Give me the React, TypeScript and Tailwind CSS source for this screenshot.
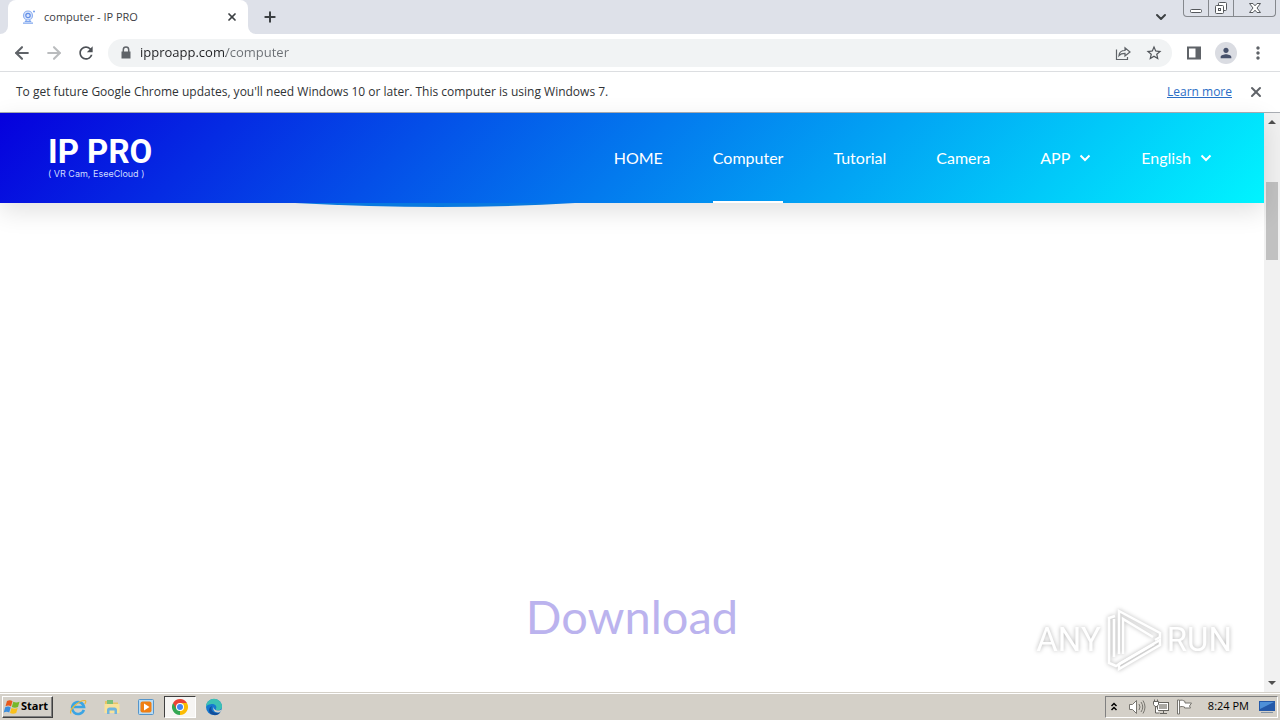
import { useState, type ReactNode } from "react";
import { ArrowLeft, ArrowRight, ChevronDown, Plus, X } from "lucide-react";
import { MdMoreVert, MdPerson, MdRefresh, MdStarOutline } from "react-icons/md";

type NavItem = {
  label: string;
  active?: boolean;
  menu?: boolean;
};

const navItems: NavItem[] = [
  { label: "HOME" },
  { label: "Computer", active: true },
  { label: "Tutorial" },
  { label: "Camera" },
  { label: "APP", menu: true },
  { label: "English", menu: true },
];

const CameraFavicon = () => (
  <svg viewBox="0 0 16 16" className="size-4 shrink-0" fill="none">
    <circle cx="8" cy="6.5" r="4.5" fill="#dbe6fb" stroke="#8fb0f0" strokeWidth="1.2" />
    <circle cx="8" cy="6.5" r="2.2" stroke="#5f8de8" strokeWidth="1.2" />
    <path d="M6.500 11l-1 1.500h5l-1-1.500M3 14.200h10M13 2.500h2M14 1.500v2" stroke="#7fa6ee" strokeWidth="1.200" />
  </svg>
);

const WindowButtons = () => (
  <div className="flex h-[17px] w-[93px] overflow-hidden rounded-b border border-t-0 border-[#85888d] text-[#55585c]">
    <button aria-label="Minimize" className="flex w-[25px] items-center justify-center border-r border-[#85888d]">
      <svg viewBox="0 0 14 14" className="size-3.5" fill="#fff" stroke="currentColor">
        <rect x="1.500" y="8.500" width="11" height="3" rx="1" />
      </svg>
    </button>
    <button aria-label="Restore" className="flex w-[25px] items-center justify-center border-r border-[#85888d]">
      <svg viewBox="0 0 14 14" className="size-3.5" fill="#fff" stroke="currentColor">
        <rect x="4.500" y="1.500" width="8" height="8" rx="1" />
        <rect x="1.500" y="4.500" width="8" height="8" rx="1" />
        <rect x="4.500" y="7.500" width="2" height="2" />
      </svg>
    </button>
    <button aria-label="Close window" className="flex flex-1 items-center justify-center">
      <svg viewBox="0 0 14 14" className="size-3.5" fill="#fff" stroke="currentColor">
        <path d="M1.500 2.500h3.500l2 2.300 2-2.300h3.500l-3.500 4.500 3.500 4.500h-3.500l-2-2.300-2 2.300H1.500L5 7z" />
      </svg>
    </button>
  </div>
);

const TabStrip = () => (
  <div className="flex h-[34px] shrink-0 bg-[#dee1e9]">
    <div className="w-2 bg-white">
      <div className="h-full rounded-br-lg bg-[#dee1e9]" />
    </div>
    <div className="flex w-60 items-center rounded-t-lg bg-white pr-2 pl-3">
      <CameraFavicon />
      <span className="ml-2 flex-1 font-['Open_Sans',sans-serif] text-[11px] text-[#3c4043]">
        computer - IP PRO
      </span>
      <button aria-label="Close tab" className="p-0.5">
        <X className="size-3" strokeWidth={3.5} color="#3c4043" />
      </button>
    </div>
    <div className="w-2 bg-white">
      <div className="h-full rounded-bl-lg bg-[#dee1e9]" />
    </div>
    <button aria-label="New tab" className="px-1.5">
      <Plus className="size-4" strokeWidth={3} color="#3c4043" />
    </button>
    <div className="ml-auto flex">
      <button aria-label="Search tabs" className="mr-2.5 px-1">
        <ChevronDown className="size-4" strokeWidth={3} color="#3c4043" />
      </button>
      <WindowButtons />
      <div className="w-1" />
    </div>
  </div>
);

const Toolbar = () => {
  const [url, setUrl] = useState("ipproapp.com/computer");

  return (
    <div className="flex h-[38px] shrink-0 items-center border-b border-[#dcdee1] bg-white text-[#5f6368]">
      <button aria-label="Back" className="ml-3">
        <ArrowLeft className="size-5" strokeWidth={2.5} />
      </button>
      <button aria-label="Forward" className="ml-3 text-[#babcbe]">
        <ArrowRight className="size-5" strokeWidth={2.5} />
      </button>
      <button aria-label="Reload" className="ml-3 text-[#4d5156]">
        <MdRefresh className="size-5" />
      </button>
      <div className="ml-3 flex h-7 flex-1 items-center rounded-full bg-[#f1f3f4] pr-[9px] pl-2.5">
        <svg viewBox="0 0 16 16" className="size-4 shrink-0" fill="currentColor">
          <path d="M3.500 6.500h9v7h-9z" />
          <path d="M5.300 7V4.800a2.700 2.700 0 0 1 5.400 0V7" fill="none" stroke="currentColor" strokeWidth="1.500" />
        </svg>
        <input
          type="text"
          aria-label="Address"
          value={url}
          onChange={(e) => setUrl(e.target.value)}
          className="ml-1.5 min-w-0 flex-1 bg-[linear-gradient(to_right,#202124_86px,#6b6f74_86px)] bg-clip-text font-['Open_Sans',sans-serif] text-[13px] text-transparent caret-black outline-none"
        />
        <button aria-label="Share this page" className="mr-3.5">
          <svg viewBox="0 0 16 16" className="size-4" fill="none" stroke="currentColor" strokeWidth="1.2">
            <path d="M1.500 4.500v10h11v-2.500" />
            <path d="M4 10.500c.3-3.500 2.500-5 6-5V2.700l5 4.300-5 4V8.300c-2.700 0-4.700.6-6 2.200z" />
          </svg>
        </button>
        <button aria-label="Bookmark this tab" className="text-[#505459]">
          <MdStarOutline className="size-[18px]" />
        </button>
      </div>
      <button aria-label="Side panel" className="ml-3.5">
        <svg viewBox="0 0 16 16" className="size-4" fill="currentColor">
          <path d="M1 1.500h14v13H1zM3 3.500v9h6.500v-9z" fillRule="evenodd" />
        </svg>
      </button>
      <button aria-label="Profile" className="ml-[13px] flex size-[22px] items-center justify-center rounded-full bg-[#dadce2]">
        <MdPerson className="size-4" color="#46516b" />
      </button>
      <button aria-label="Chrome menu" className="mr-3 ml-[11px]">
        <MdMoreVert className="size-5" />
      </button>
    </div>
  );
};

const InfoBar = () => (
  <div className="flex h-[41px] shrink-0 items-center border-b border-[#a9adb3] bg-white px-4 font-['Open_Sans',sans-serif] text-[12px] text-[#303336]">
    <p className="flex-1">
      To get future Google Chrome updates, you'll need Windows 10 or later. This
      computer is using Windows 7.
    </p>
    <a href="#learn" className="text-[#2a6ec6] underline">
      Learn more
    </a>
    <button aria-label="Dismiss" className="ml-4">
      <X className="size-4" strokeWidth={3} color="#5f6368" />
    </button>
  </div>
);

const NavChevron = () => (
  <svg viewBox="0 0 12 8" className="h-2 w-3" fill="none" stroke="currentColor" strokeWidth="2">
    <path d="M1.500 1.500L6 6l4.500-4.500" />
  </svg>
);

const SiteHeader = () => (
  <header className="relative flex h-[90px] items-center bg-[linear-gradient(135deg,#0600dd,#00f4ff)] pr-[52px] pl-12 text-white shadow-[0_8px_24px_rgba(0,0,0,0.12)]">
    <a href="#home" className="block">
      <span className="block font-['Roboto',sans-serif] text-[33px] leading-8 font-bold">
        IP PRO
      </span>
      <span className="block font-['Inter','Open_Sans',sans-serif] text-[9px] leading-3 text-[#cfdcff]">
        ( VR Cam, EseeCloud )
      </span>
    </a>
    <nav className="ml-auto flex h-full gap-[50px] font-['Lato',sans-serif] text-[16px]">
      {navItems.map((item) =>
        item.menu ? (
          <button key={item.label} className="flex items-center gap-[9px]">
            {item.label}
            <NavChevron />
          </button>
        ) : (
          <a
            key={item.label}
            href={`#${item.label.toLowerCase()}`}
            className={
              item.active
                ? "flex items-center border-y-2 border-t-transparent border-b-white"
                : "flex items-center"
            }
          >
            {item.label}
          </a>
        )
      )}
    </nav>
    <svg viewBox="0 0 280 4" className="absolute top-full left-[295px] h-1 w-[280px]">
      <path d="M0 0Q150 8 280 0z" fill="#0879e0" />
    </svg>
  </header>
);

const Watermark = () => (
  <div className="absolute right-8 bottom-5 flex items-center gap-1 font-['Roboto',sans-serif] text-[33px] leading-[60px] text-white [filter:drop-shadow(0_0_2px_rgba(0,0,0,0.3))]">
    <span>ANY</span>
    <svg viewBox="0 0 58 64" className="h-16 w-[58px]" fill="none" stroke="#fff" strokeWidth="2.5">
      <path d="M18 46V11l30 18M14 46V3l41 22v4l-5 3" />
      <path d="M10 8l-6 2v45l7 3 38-22M9 11v38" />
      <path d="M14 56v5l41-24v-5L14 56z" />
    </svg>
    <span>RUN</span>
  </div>
);

const Scrollbar = () => (
  <div className="flex w-4 shrink-0 flex-col items-center bg-[#f1f1f1]">
    <button aria-label="Scroll up" className="flex h-[18px] items-center">
      <svg viewBox="0 0 8 4" className="h-1 w-2" fill="#505050">
        <path d="M0 4l4-4 4 4z" />
      </svg>
    </button>
    <div className="mt-[51px] h-[78px] w-3 bg-[#c1c1c1]" />
    <button aria-label="Scroll down" className="mt-auto flex h-[18px] items-center">
      <svg viewBox="0 0 8 4" className="h-1 w-2" fill="#505050">
        <path d="M0 0l4 4 4-4z" />
      </svg>
    </button>
  </div>
);

const WindowsFlag = () => (
  <svg viewBox="0 0 18 18" className="size-[18px]">
    <path d="M4 3c2-1 4-1 5.500.3L8 8.500C6.500 7.300 4.500 7.300 2.500 8.200z" fill="#e8591c" />
    <path d="M10.300 3.700c2 1 4 1 6.200 0L15 9c-2 1-4.200 1-6.200 0z" fill="#76b82a" />
    <path d="M2.200 9.300c2-1 4-1 5.500.2l-1.500 5C4.700 13.500 2.700 13.500.7 14.400z" fill="#3b8ede" />
    <path d="M8.500 10c2 1 4 1 6.200.1l-1.500 5c-2 1-4.200 1-6.200 0z" fill="#f9c01b" />
  </svg>
);

const ExplorerIcon = () => (
  <svg viewBox="0 0 18 18" className="size-[18px]" fill="none">
    <path d="M14.800 11.800A6 6 0 1 1 15 9H5" stroke="#3ba5e4" strokeWidth="2.600" />
    <path d="M2 15.500C-.5 12 10 2 16 2.500c1.500.5.500 2.500-.3 3.500" stroke="#e9b83a" strokeWidth="1.200" />
  </svg>
);

const FolderIcon = () => (
  <svg viewBox="0 0 18 18" className="size-[18px]">
    <path d="M2 3h5l1 1.500h7V15H2z" fill="#e7c465" />
    <path d="M4 2h6v4H4z" fill="#7bc07a" />
    <path d="M1.500 6H16.500v9H1.500z" fill="#f8e29a" />
    <path d="M4 16v-4c0-1.500 1-2.500 2.500-2.500h5c1.500 0 2.500 1 2.500 2.500v4h-2.500v-3.500h-5V16z" fill="#6fb4dd" />
  </svg>
);

const MediaIcon = () => (
  <svg viewBox="0 0 18 18" className="size-[18px]">
    <rect x="1.500" y="1.500" width="15" height="15" rx="1" fill="#b9dcf4" stroke="#5495cb" />
    <rect x="3.500" y="3.500" width="11" height="11" rx="2" fill="#f07f13" />
    <path d="M7 5.500v7L12.500 9z" fill="#fff" />
  </svg>
);

const ChromeIcon = () => (
  <svg viewBox="0 0 18 18" className="size-[18px]">
    <path d="M9 9V1l6.930 4A8 8 0 0 1 9 17z" fill="#fbbc04" />
    <path d="M9 9L9 17A8 8 0 0 1 2.070 5z" fill="#34a853" />
    <path d="M2.070 5A8 8 0 0 1 15.930 5H9L5.500 11z" fill="#ea4335" />
    <circle cx="9" cy="9" r="4" fill="#fff" />
    <circle cx="9" cy="9" r="3" fill="#4285f4" />
  </svg>
);

const EdgeIcon = () => (
  <svg viewBox="0 0 18 18" className="size-[18px]">
    <circle cx="9" cy="9" r="8" fill="#1679cf" />
    <path d="M1 9a8 8 0 0 1 16-.5c0 2.500-1.800 3.800-4 3.800-1.700 0-2.600-.7-2-1.600C12.500 8 9.500 5.500 6.500 6 3.500 6.300 1.500 7.500 1 9z" fill="#3cc1b4" />
    <path d="M7 8c-2 3 .5 7 5 7 1.500 0 2.500-.4 3.500-1-2 3.500-6.500 4-9.500 2S3.500 9.500 7 8z" fill="#114e9c" />
    <path d="M9.500 8c-1.500 1-1 4 3 4.500 1.500.2 3-.3 4-1-.4 1.700-1.500 2.800-3 3C9.500 15 6.500 11 9.500 8z" fill="#d4d0c8" />
  </svg>
);

const taskIcons: { name: string; icon: ReactNode; open?: boolean }[] = [
  { name: "Internet Explorer", icon: <ExplorerIcon /> },
  { name: "Windows Explorer", icon: <FolderIcon /> },
  { name: "Media Player", icon: <MediaIcon /> },
  { name: "Google Chrome", icon: <ChromeIcon />, open: true },
  { name: "Microsoft Edge", icon: <EdgeIcon /> },
];

const SystemTray = () => (
  <div className="ml-auto flex h-[22px] items-center border border-t-[#808080] border-r-white border-b-white border-l-[#808080] pr-0.5 pl-1 text-black">
    <button aria-label="Show hidden icons">
      <svg viewBox="0 0 8 10" className="h-2.5 w-2" fill="none" stroke="currentColor" strokeWidth="1.500">
        <path d="M1.500 4l2.500-2.500L6.500 4M1.500 8l2.500-2.500L6.500 8" />
      </svg>
    </button>
    <button aria-label="Volume" className="ml-2.5">
      <svg viewBox="0 0 18 16" className="h-4 w-[18px]" fill="#fff" stroke="#77756f">
        <path d="M1.500 5.500h3l4-4v13l-4-4h-3z" />
        <path d="M11 5q2 3 0 6M13 3q3.500 5 0 10M15 1.500q4 6.500 0 13" fill="none" />
      </svg>
    </button>
    <button aria-label="Network" className="ml-1.5">
      <svg viewBox="0 0 18 16" className="h-4 w-[18px]" fill="#fff" stroke="#65635e">
        <rect x="5.500" y="3.500" width="11" height="8" />
        <path d="M7 5h8v5H7z" fill="#a9a7a2" stroke="none" />
        <path d="M8 14.500h7M11.500 12v2M3.500 7v7h4" />
        <path d="M1.500 2.500h5v3l-1.500 2H3l-1.500-2zM2.500 2.500V.5M5.500 2.500V.5" />
      </svg>
    </button>
    <button aria-label="Action Center" className="ml-1.5">
      <svg viewBox="0 0 18 16" className="h-4 w-[18px]" fill="#fff" stroke="#77756f">
        <path d="M3.500 1.500c2-1 4 0 5.500 1v1.500h6.500l-2 3 1 2H8.500V8c-1.500-.5-3-.8-5 0z" />
        <path d="M1.500 1h2v14h-2z" />
      </svg>
    </button>
    <time className="ml-3.5 font-['Open_Sans',sans-serif] text-[11px]">
      8:24 PM
    </time>
    <button aria-label="Show desktop" className="ml-2.5">
      <svg viewBox="0 0 16 14" className="h-3.5 w-4">
        <path d="M0 1h16v10H0z" fill="#2459a9" />
        <path d="M1 2h14L1 9z" fill="#4e90d8" />
        <path d="M2 12h12v1H2z" fill="#8292a4" />
      </svg>
    </button>
  </div>
);

const Taskbar = () => (
  <footer className="flex h-7 shrink-0 items-center border-t border-[#d4d0c8] bg-[#d4d0c8] px-0.5 shadow-[inset_0_1px_0_#fff]">
    <button className="flex h-[22px] items-center border border-t-white border-r-[#404040] border-b-[#404040] border-l-white pr-1 font-['Noto_Sans',sans-serif] text-[11px] font-bold text-black shadow-[inset_-1px_-1px_0_#808080]">
      <WindowsFlag />
      Start
    </button>
    <div className="ml-[9px] flex gap-0.5">
      {taskIcons.map(({ name, icon, open }) => (
        <button
          key={name}
          aria-label={name}
          className={
            open
              ? "flex h-[22px] w-8 items-center justify-center border border-t-[#404040] border-r-white border-b-white border-l-[#404040] bg-[#f6f5f3]"
              : "flex h-[22px] w-8 items-center justify-center"
          }
        >
          {icon}
        </button>
      ))}
    </div>
    <SystemTray />
  </footer>
);

const App = () => (
  <div className="flex h-screen flex-col overflow-hidden bg-white font-['Noto_Sans',sans-serif]">
    <TabStrip />
    <Toolbar />
    <InfoBar />
    <div className="flex min-h-0 flex-1">
      <main className="relative flex flex-1 flex-col">
        <SiteHeader />
        <h1 className="mt-auto mb-[46px] text-center font-['Lato',sans-serif] text-[47px] leading-[60px] text-[#bbb3ee]">
          Download
        </h1>
        <Watermark />
      </main>
      <Scrollbar />
    </div>
    <Taskbar />
  </div>
);

export default App;
